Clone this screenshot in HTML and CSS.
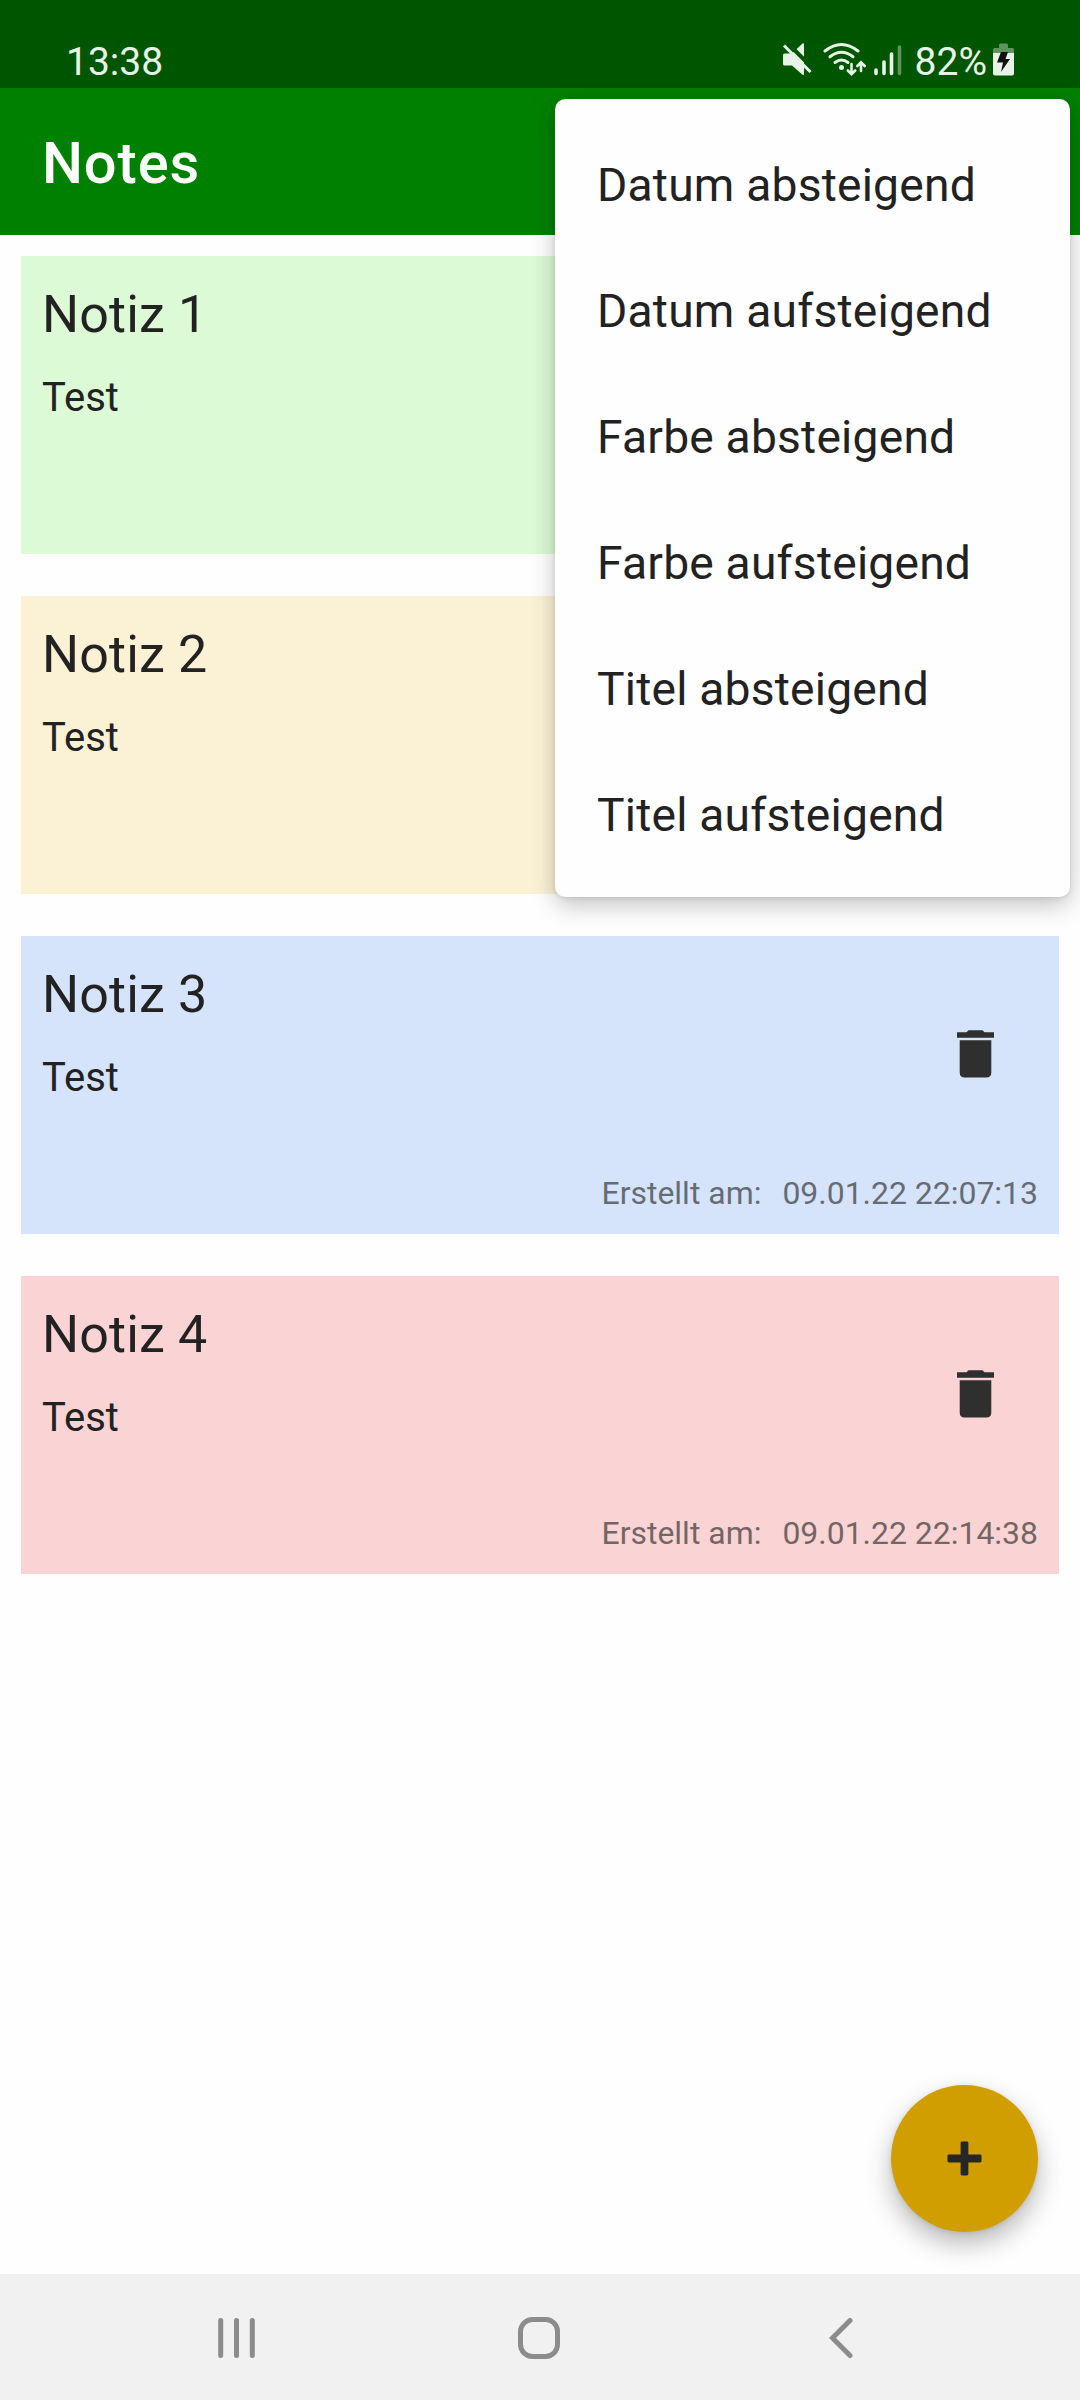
FILE: index.html
```html
<!DOCTYPE html>
<html lang="de">
<head>
<meta charset="utf-8">
<title>Notes</title>
<link rel="stylesheet" href="styles.css">
</head>
<body>
<div class="screen">
  <header class="status-bar">
    <span class="clock">13:38</span>
    <div class="status-right">
      <svg class="status-icons" width="122" height="36" viewBox="780 42 122 36">
        <path class="ink" d="M784.5 53.5h7.5L802.500 43.500q1.500-.8 1.500.8V74q0 1.500-1.500.8L792 65.500h-7.500q-1.500 0-1.500-1.500v-9q0-1.500 1.500-1.500z"/>
        <path class="cut" d="M787 42.500L812 67.500"/>
        <path class="line" d="M784 45.500L810.500 72"/>
        <g class="wifi">
          <path d="M825 51q16.500-13 33 0"/>
          <path d="M830 56.800q11.500-9 23 0"/>
          <path d="M835 62.500q6.500-5 13 0"/>
        </g>
        <circle class="ink" cx="841.500" cy="67.500" r="2.500"/>
        <g class="arrows">
          <path d="M851.500 64v9M847.800 70.500l3.700 3.700 3.700-3.700"/>
          <path d="M861 71v-8M857.300 66l3.700-3.700 3.700 3.700"/>
        </g>
        <g class="bars">
          <path d="M876 70v3.500M884 62v11.500M891.500 54v19.500"/>
          <path class="dim" d="M899.500 47v26.500"/>
        </g>
      </svg>
      <span class="percent">82%</span>
      <svg class="battery" width="22" height="33" viewBox="0 0 22 33">
        <path class="ink dim" d="M6 5V2q0-1.500 1.500-1.500h6Q15 .5 15 2v3h4.500Q21 5 21 6.500V10H0V6.500Q0 5 1.500 5z"/>
        <path class="ink" d="M0 10h21v20.500q0 2-2 2H2q-2 0-2-2z"/>
        <path class="bolt" d="M8 9h7l-2.500 7H17L8 29l2-9.500H4z"/>
      </svg>
    </div>
  </header>
  <div class="app-bar"><h1>Notes</h1></div>
  <main class="notes">
    <article class="note green">
      <h2>Notiz 1</h2><p>Test</p>
    </article>
    <article class="note yellow">
      <h2>Notiz 2</h2><p>Test</p>
    </article>
    <article class="note blue">
      <div class="note-text"><h2>Notiz 3</h2><p>Test</p></div>
      <svg class="trash" width="37" height="48" viewBox="0 0 37 48"><path d="M0 2.300h9.500L11.500.2h14l2 2.100H37v5.500H0zM2.700 10.300h31.600v32.200q0 5-5 5H7.700q-5 0-5-5z"/></svg>
      <div class="created"><span>Erstellt am:</span><time>09.01.22 22:07:13</time></div>
    </article>
    <article class="note red">
      <div class="note-text"><h2>Notiz 4</h2><p>Test</p></div>
      <svg class="trash" width="37" height="48" viewBox="0 0 37 48"><path d="M0 2.300h9.500L11.500.2h14l2 2.100H37v5.500H0zM2.700 10.300h31.600v32.200q0 5-5 5H7.700q-5 0-5-5z"/></svg>
      <div class="created"><span>Erstellt am:</span><time>09.01.22 22:14:38</time></div>
    </article>
  </main>
  <nav class="nav-bar">
    <svg width="37" height="42" viewBox="0 0 37 42"><path d="M2.700 3.500v35M18.500 3.500v35M34.300 3.500v35"/></svg>
    <svg width="42" height="42" viewBox="0 0 42 42"><rect x="2.500" y="2.500" width="37" height="37" rx="12"/></svg>
    <svg class="back" width="24" height="42" viewBox="0 0 24 42"><path d="M21 3.500L3.500 21 21 38.500"/></svg>
  </nav>
  <ul class="menu">
    <li>Datum absteigend</li>
    <li>Datum aufsteigend</li>
    <li>Farbe absteigend</li>
    <li>Farbe aufsteigend</li>
    <li>Titel absteigend</li>
    <li>Titel aufsteigend</li>
  </ul>
  <button class="fab" aria-label="Neue Notiz">
    <svg width="35" height="35" viewBox="0 0 36 36"><path d="M14 2q0-1.500 1.500-1.500h5Q22 .5 22 2v12h12q1.500 0 1.500 1.500v5q0 1.500-1.500 1.500H22v12q0 1.500-1.500 1.500h-5Q14 35.500 14 34V22H2Q.5 22 .5 20.500v-5Q.5 14 2 14h12z"/></svg>
  </button>
</div>
</body>
</html>
```
FILE: styles.css
```css
* { box-sizing: border-box; margin: 0; padding: 0; }

body {
  background: #fefefe;
  color: #222;
  font-family: Roboto, sans-serif;
}

.screen {
  position: relative;
  display: flex;
  flex-direction: column;
  width: 1080px;
  height: 2400px;
  overflow: hidden;
}

.status-bar {
  display: flex;
  justify-content: space-between;
  height: 88px;
  padding: 38px 65px 0 66px;
  background: #005500;
  color: #e8f3e8;
  font-size: 39px;
  line-height: 48px;
}

.status-right { display: flex; }
.status-icons { margin-top: 4px; }
.percent { margin-left: 13px; }
.battery { margin: 5px 0 0 6px; }

.ink { fill: #e8f3e8; }
.dim { opacity: .4; }
.bolt { fill: #111; }
.cut { stroke: #005500; stroke-width: 4; }
.line { stroke: #e8f3e8; stroke-width: 3; }
.wifi, .arrows, .bars { fill: none; stroke: #e8f3e8; stroke-width: 3; stroke-linecap: round; }
.arrows { stroke-width: 2.6; }
.bars { stroke-width: 3.6; }

.app-bar {
  display: flex;
  align-items: center;
  height: 147px;
  padding: 3px 0 0 42px;
  background: #008000;
  color: #fff;
}

.app-bar h1 {
  font-size: 57.75px;
  font-weight: 500;
  letter-spacing: .9px;
}

.notes {
  display: flex;
  flex: 1;
  flex-direction: column;
  gap: 42px;
  padding: 21px;
}

.note {
  display: grid;
  grid-template-columns: 1fr 37px 44px;
  grid-template-rows: auto 1fr auto;
  height: 298px;
  padding: 21px;
}

.note h2 {
  font-size: 52px;
  font-weight: 400;
  line-height: 76px;
  letter-spacing: .15px;
}

.note p {
  font-size: 40px;
  line-height: 48px;
  margin-top: 21px;
}

.note-text { grid-row: 1 / 3; }
.green { background: #dcfad5; }
.yellow { background: #fbf1d5; }
.blue { background: #d6e4fb; }
.red { background: #fad4d4; }
.green, .yellow { display: block; }

.trash { grid-column: 2; grid-row: 1 / 3; margin-top: 73px; }
.trash path { fill: #2f2f2f; }

.created {
  grid-column: 1 / 4;
  grid-row: 3;
  display: flex;
  justify-content: flex-end;
  gap: 21px;
  color: #222;
  opacity: .62;
  font-size: 31.95px;
  line-height: 40px;
}

.nav-bar {
  display: flex;
  gap: 263px;
  height: 126px;
  padding: 43px 0 0 218px;
  background: #f1f1f1;
}

.nav-bar svg { fill: none; stroke: #8c8c8c; stroke-width: 5; stroke-linecap: round; }
.nav-bar .back { margin-left: 6px; }

.menu {
  position: absolute;
  top: 99px;
  left: 555px;
  width: 515px;
  padding: 21px 0;
  border-radius: 10.5px;
  background: #fefefe;
  box-shadow: 0 8px 24px rgba(0, 0, 0, .24), 0 1px 4px rgba(0, 0, 0, .1);
  list-style: none;
}

.menu li {
  height: 126px;
  padding-left: 42px;
  font-size: 46.2px;
  line-height: 130px;
  letter-spacing: .2px;
}

.fab {
  position: absolute;
  top: 2085px;
  left: 891px;
  display: grid;
  place-items: center;
  width: 147px;
  height: 147px;
  border: 0;
  border-radius: 50%;
  background: #d19e00;
  box-shadow: 0 12px 26px rgba(0, 0, 0, .28), 0 1px 5px rgba(0, 0, 0, .1);
}

.fab path { fill: #262626; }
```
